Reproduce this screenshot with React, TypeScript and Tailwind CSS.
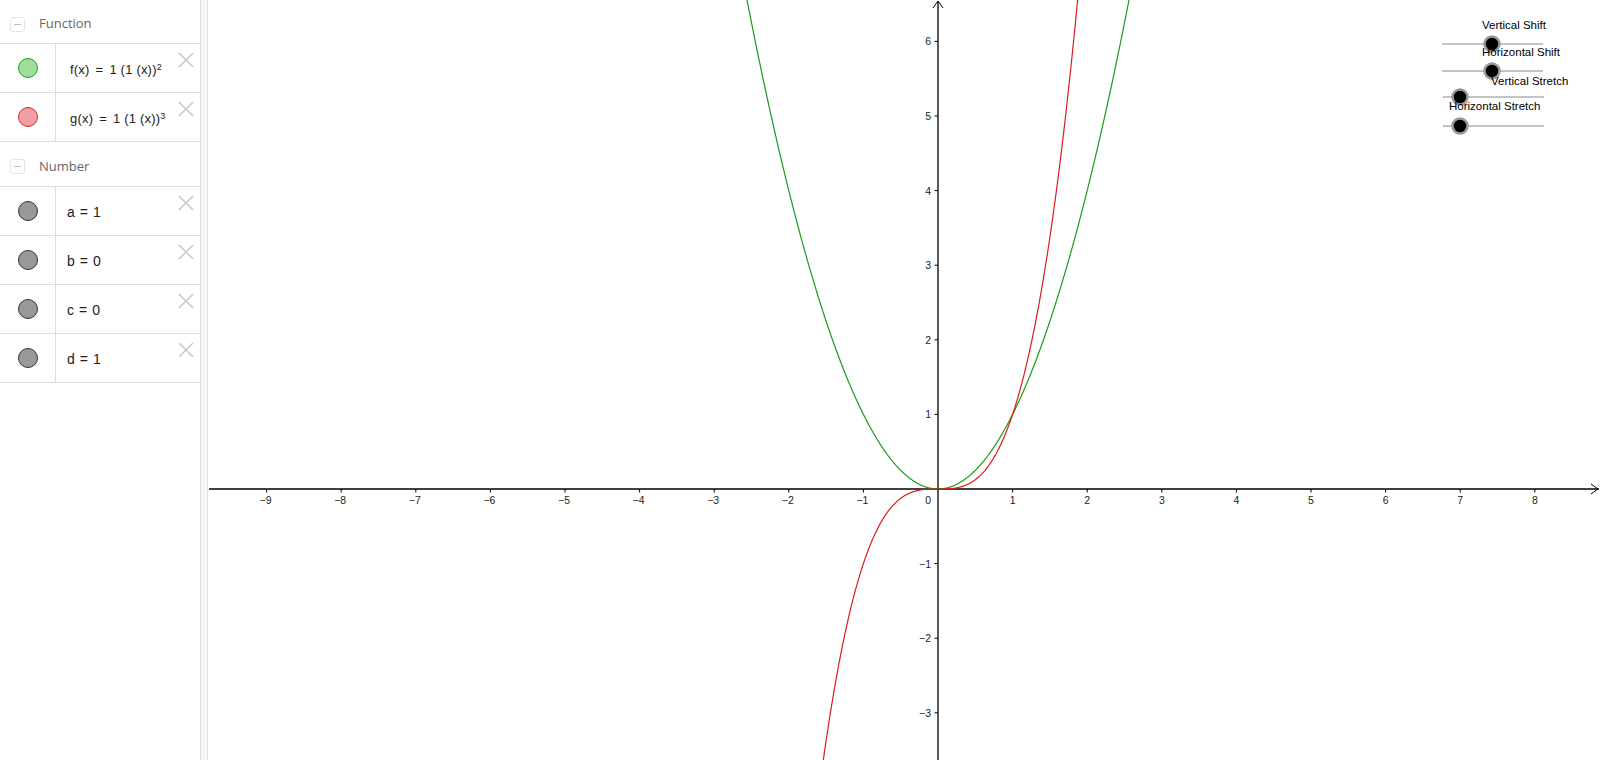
import React from 'react';

const UNIT = 74.6;
const OX = 730; // origin x inside graph svg (page x 938)
const OY = 489;
const W = 1392;
const H = 760;

function curve(fn: (x: number) => number, from: number, to: number) {
  const pts: string[] = [];
  for (let x = from; x <= to + 1e-9; x += 0.005) {
    const px = OX + x * UNIT;
    const py = OY - fn(x) * UNIT;
    pts.push(`${px.toFixed(2)},${py.toFixed(2)}`);
  }
  return 'M' + pts.join('L');
}

function Minus() {
  return (
    <span className="flex h-[15px] w-[15px] items-center justify-center rounded-[3px] border border-[#e4e4e4]">
      <span className="h-px w-[7px] bg-[#bbb]" />
    </span>
  );
}

function CloseX() {
  return (
    <svg width="16" height="16" viewBox="0 0 16 16" className="absolute right-[6px] top-[8px]">
      <path d="M1 1L15 15M15 1L1 15" stroke="#c8c8c8" strokeWidth="1.5" />
    </svg>
  );
}

function Header({ label, h }: { label: string; h: string }) {
  return (
    <div className={`flex ${h} items-center gap-[14px] border-b border-[#ddd] pl-[10px] pt-[5px]`}>
      <Minus />
      <span className="text-[13px] text-[#666]">{label}</span>
    </div>
  );
}

function Row({ dot, ring, pad, children }: { dot: string; ring: string; pad: string; children: React.ReactNode }) {
  return (
    <div className="relative flex h-[49px] border-b border-[#ddd]">
      <div className="flex w-[56px] items-center justify-center border-r border-[#ddd]">
        <span
          className="block h-[20px] w-[20px] rounded-full border"
          style={{ background: dot, borderColor: ring }}
        />
      </div>
      <div className={`flex items-center ${pad} pt-[3px] text-[#222]`}>{children}</div>
      <CloseX />
    </div>
  );
}

function Slider({ label, lx, ly, y, x1, x2, k }: { label: string; lx: number; ly: number; y: number; x1: number; x2: number; k: number }) {
  return (
    <g>
      <line x1={x1} y1={y} x2={x2} y2={y} stroke="#888" strokeWidth="1" />
      <text x={lx} y={ly} fontSize="11.5" fill="#000">{label}</text>
      <circle cx={k} cy={y} r="7.5" fill="#000" stroke="#999" strokeWidth="2.5" />
    </g>
  );
}

function Graph() {
  const xs = [-9, -8, -7, -6, -5, -4, -3, -2, -1, 1, 2, 3, 4, 5, 6, 7, 8];
  const ys = [6, 5, 4, 3, 2, 1, -1, -2, -3];
  const fmt = (n: number) => (n < 0 ? '\u2212' + Math.abs(n) : String(n));
  const sx = (v: number) => v - 208;
  return (
    <svg width={W} height={H} className="block" style={{ fontFamily: '"Liberation Sans", Arial, sans-serif' }}>
      {/* axes */}
      <line x1={1} y1={OY} x2={W - 1} y2={OY} stroke="#000" strokeWidth="1.3" />
      <path d={`M${W - 9} ${OY - 5}L${W - 2} ${OY}L${W - 9} ${OY + 5}`} fill="none" stroke="#000" strokeWidth="1" />
      <line x1={OX} y1={1} x2={OX} y2={H} stroke="#000" strokeWidth="1.3" />
      <path d={`M${OX - 5} 8L${OX} 1L${OX + 5} 8`} fill="none" stroke="#000" strokeWidth="1" />
      {xs.map((v) => {
        const px = OX + v * UNIT;
        return (
          <g key={'x' + v}>
            <line x1={px} y1={OY} x2={px} y2={OY + 3.5} stroke="#000" strokeWidth="1" />
            <text x={px + (v < 0 ? -1 : 0)} y={OY + 15} fontSize="10.5" fill="#222" textAnchor="middle">{fmt(v)}</text>
          </g>
        );
      })}
      <text x={OX - 7} y={OY + 15} fontSize="10.5" fill="#222" textAnchor="end">0</text>
      {ys.map((v) => {
        const py = OY - v * UNIT;
        return (
          <g key={'y' + v}>
            <line x1={OX - 3.5} y1={py} x2={OX} y2={py} stroke="#000" strokeWidth="1" />
            <text x={OX - 7} y={py + 4} fontSize="10.5" fill="#222" textAnchor="end">{fmt(v)}</text>
          </g>
        );
      })}
      {/* curves */}
      <path d={curve((x) => x * x, -2.62, 2.62)} fill="none" stroke="#1a9a1a" strokeWidth="1.2" />
      <path d={curve((x) => x * x * x, -1.6, 1.9)} fill="none" stroke="#dc1c1c" strokeWidth="1.2" />
      {/* sliders */}
      <Slider label="Vertical Shift" lx={sx(1482)} ly={29} y={44} x1={sx(1442)} x2={sx(1543)} k={sx(1492)} />
      <Slider label="Horizontal Shift" lx={sx(1482)} ly={56} y={71} x1={sx(1442)} x2={sx(1543)} k={sx(1492)} />
      <Slider label="Vertical Stretch" lx={sx(1491)} ly={85} y={97} x1={sx(1443)} x2={sx(1544)} k={sx(1460)} />
      <Slider label="Horizontal Stretch" lx={sx(1449)} ly={110} y={126} x1={sx(1443)} x2={sx(1544)} k={sx(1460)} />
    </svg>
  );
}

function Fn({ name, exp }: { name: string; exp: string }) {
  return (
    <span className="text-[13px] tracking-[0.2px]" style={{ fontFamily: '"Liberation Sans", Arial, sans-serif' }}>
      {name}(x)<span className="px-[6px]">=</span>1 (1 (x))
      <sup className="relative top-[-4px] text-[9px]">{exp}</sup>
    </span>
  );
}

function Val({ v }: { v: string }) {
  return (
    <span className="text-[14px]" style={{ fontFamily: '"Liberation Sans", Arial, sans-serif' }}>
      {v[0]}<span className="px-[5px]">=</span>{v[1]}
    </span>
  );
}

export default function App() {
  return (
    <div className="flex h-[760px] w-[1600px] overflow-hidden bg-white" style={{ fontFamily: '"Open Sans", "Liberation Sans", sans-serif' }}>
      <aside className="w-[201px] shrink-0 border-r border-[#ddd]">
        <Header label="Function" h="h-[44px]" />
        <Row dot="#a0dc9c" ring="#1f9d1f" pad="pl-[14px]"><Fn name="f" exp="2" /></Row>
        <Row dot="#f0a0a4" ring="#d42a2a" pad="pl-[14px]"><Fn name="g" exp="3" /></Row>
        <Header label="Number" h="h-[45px]" />
        <Row dot="#999" ring="#333" pad="pl-[11px]"><Val v="a1" /></Row>
        <Row dot="#999" ring="#333" pad="pl-[11px]"><Val v="b0" /></Row>
        <Row dot="#999" ring="#333" pad="pl-[11px]"><Val v="c0" /></Row>
        <Row dot="#999" ring="#333" pad="pl-[11px]"><Val v="d1" /></Row>
      </aside>
      <div className="w-[7px] shrink-0 border-r border-[#e2e2e2] bg-[#f5f5f5]" />
      <main className="relative flex-1 overflow-hidden">
        <Graph />
      </main>
    </div>
  );
}
